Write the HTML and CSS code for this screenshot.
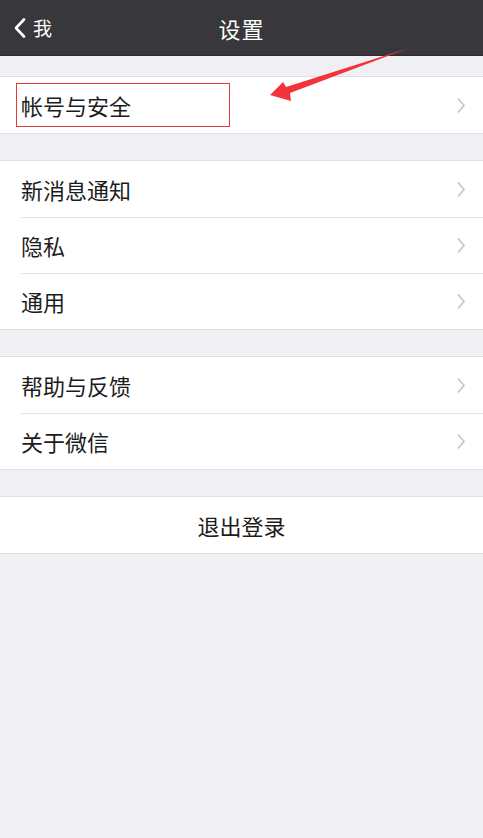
FILE: index.html
```html
<!DOCTYPE html>
<html lang="zh-CN">
<head>
<meta charset="utf-8">
<title>设置</title>
<link rel="stylesheet" href="styles.css">
</head>
<body>
<div class="page">
  <header class="navbar">
    <div class="back">
      <svg class="back-icon" width="12" height="20" viewBox="0 0 12 20"><path d="M10 1.5 L2 10 L10 18.5" fill="none" stroke="#fff" stroke-width="2.6" stroke-linecap="round" stroke-linejoin="round"/></svg>
      <span class="back-text">我</span>
    </div>
    <div class="title">设置</div>
  </header>

  <main class="content">
    <section class="group">
      <div class="row"><span class="label">帐号与安全</span><svg class="chev" width="10" height="17" viewBox="0 0 10 17"><path d="M2 1.5 L8 8.5 L2 15.5" fill="none" stroke="#c7c7cc" stroke-width="1.8"/></svg></div>
    </section>

    <section class="group">
      <div class="row"><span class="label">新消息通知</span><svg class="chev" width="10" height="17" viewBox="0 0 10 17"><path d="M2 1.5 L8 8.5 L2 15.5" fill="none" stroke="#c7c7cc" stroke-width="1.8"/></svg></div>
      <div class="row"><span class="label">隐私</span><svg class="chev" width="10" height="17" viewBox="0 0 10 17"><path d="M2 1.5 L8 8.5 L2 15.5" fill="none" stroke="#c7c7cc" stroke-width="1.8"/></svg></div>
      <div class="row"><span class="label">通用</span><svg class="chev" width="10" height="17" viewBox="0 0 10 17"><path d="M2 1.5 L8 8.5 L2 15.5" fill="none" stroke="#c7c7cc" stroke-width="1.8"/></svg></div>
    </section>

    <section class="group">
      <div class="row"><span class="label">帮助与反馈</span><svg class="chev" width="10" height="17" viewBox="0 0 10 17"><path d="M2 1.5 L8 8.5 L2 15.5" fill="none" stroke="#c7c7cc" stroke-width="1.8"/></svg></div>
      <div class="row"><span class="label">关于微信</span><svg class="chev" width="10" height="17" viewBox="0 0 10 17"><path d="M2 1.5 L8 8.5 L2 15.5" fill="none" stroke="#c7c7cc" stroke-width="1.8"/></svg></div>
    </section>

    <section class="group">
      <div class="row row-center"><span class="label">退出登录</span></div>
    </section>
  </main>

  <div class="highlight-box"></div>
  <svg class="annot-arrow" width="483" height="120" viewBox="0 0 483 120">
    <polygon points="270,95 283,82 286,87 409,48 290,93 291,101" fill="#f2343a"/>
  </svg>
</div>
</body>
</html>
```

FILE: styles.css
```css
* { box-sizing: border-box; }

html, body {
  margin: 0;
  padding: 0;
  background: #efeff4;
}

body {
  font-family: "Noto Sans CJK SC", "Noto Sans", sans-serif;
  color: #1c1c1c;
}

.page {
  position: relative;
  width: 483px;
  min-height: 838px;
  background: #efeff4;
  overflow: hidden;
}

.navbar {
  position: relative;
  height: 56px;
  background: #38383c;
  border-bottom: 1px solid #2a2a2d;
  display: flex;
  align-items: center;
  justify-content: center;
}

.back {
  position: absolute;
  left: 14px;
  top: 0;
  bottom: 0;
  display: flex;
  align-items: center;
  gap: 7px;
  color: #fff;
}

.back-icon { display: block; margin-top: 1px; }

.back-text {
  font-size: 19px;
  line-height: 1;
}

.title {
  color: #fff;
  font-size: 22px;
  line-height: 1;
  letter-spacing: 1px;
}

.content {
  padding-top: 20px;
  display: flex;
  flex-direction: column;
  gap: 26px;
}

.group {
  background: #fff;
  border-top: 1px solid #dedee2;
  border-bottom: 1px solid #dedee2;
  display: flex;
  flex-direction: column;
}

.row {
  height: 56px;
  display: flex;
  align-items: center;
  justify-content: space-between;
  padding: 0 17px 0 21px;
  position: relative;
}

.row + .row::before {
  content: "";
  position: absolute;
  left: 21px;
  right: 0;
  top: 0;
  border-top: 1px solid #e4e4e7;
}

.label {
  font-size: 22px;
  line-height: 1;
  color: #1c1c1c;
}

.chev { display: block; }

.row-center {
  justify-content: center;
  padding: 0;
}

.row-center .label {
  font-size: 22px;
}

.highlight-box {
  position: absolute;
  left: 16px;
  top: 83px;
  width: 214px;
  height: 44px;
  border: 1px solid #e23a3a;
}

.annot-arrow {
  position: absolute;
  left: 0;
  top: 0;
  pointer-events: none;
}
```
